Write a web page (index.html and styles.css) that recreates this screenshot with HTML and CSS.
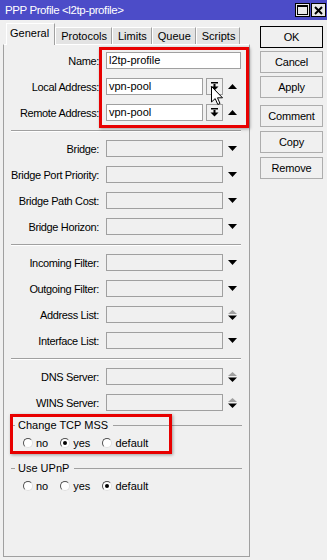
FILE: index.html
```html
<!DOCTYPE html>
<html lang="en">
<head>
    <meta charset="UTF-8">
    <title>PPP Profile</title>
    <link rel="stylesheet" href="styles.css">
</head>
<body>

<div class="window">
    <!-- title bar -->
    <div class="titlebar">
        <span class="title">PPP Profile &lt;l2tp-profile&gt;</span>
        <div class="tb-buttons">
            <span class="tb-btn"><svg width="11" height="10" viewBox="0 0 11 10"><rect x="0.5" y="0.5" width="10" height="9" fill="none" stroke="#000"/><rect x="0" y="0" width="11" height="2" fill="#000"/></svg></span>
            <span class="tb-btn"><svg width="9" height="9" viewBox="0 0 9 9"><path d="M1 1 L8 8 M8 1 L1 8" stroke="#000" stroke-width="2"/></svg></span>
        </div>
    </div>

    <div class="main">
        <div class="left">
            <div class="tabs">
                <div class="tab active">General</div>
                <div class="tab">Protocols</div>
                <div class="tab">Limits</div>
                <div class="tab">Queue</div>
                <div class="tab">Scripts</div>
            </div>

            <div class="panel">
                <div class="row">
                    <span class="label">Name:</span>
                    <span class="field filled wide">l2tp-profile</span>
                </div>
                <div class="row">
                    <span class="label">Local Address:</span>
                    <span class="field filled short">vpn-pool</span>
                    <span class="spin"><svg width="9" height="9" viewBox="0 0 9 9"><rect x="1" y="0" width="7" height="1.5" fill="#000"/><rect x="3.5" y="2" width="2" height="3" fill="#000"/><polygon points="0.5,4.5 8.5,4.5 4.5,8.5" fill="#000"/></svg></span>
                    <svg class="arrow up" width="9" height="5" viewBox="0 0 9 5"><polygon points="4.5,0 9,5 0,5" fill="#000"/></svg>
                </div>
                <div class="row">
                    <span class="label">Remote Address:</span>
                    <span class="field filled short">vpn-pool</span>
                    <span class="spin"><svg width="9" height="9" viewBox="0 0 9 9"><rect x="1" y="0" width="7" height="1.5" fill="#000"/><rect x="3.5" y="2" width="2" height="3" fill="#000"/><polygon points="0.5,4.5 8.5,4.5 4.5,8.5" fill="#000"/></svg></span>
                    <svg class="arrow up" width="9" height="5" viewBox="0 0 9 5"><polygon points="4.5,0 9,5 0,5" fill="#000"/></svg>
                </div>

                <div class="sep"></div>

                <div class="row">
                    <span class="label">Bridge:</span>
                    <span class="field"></span>
                    <svg class="arrow" width="9" height="5" viewBox="0 0 9 5"><polygon points="0,0 9,0 4.5,5" fill="#000"/></svg>
                </div>
                <div class="row">
                    <span class="label">Bridge Port Priority:</span>
                    <span class="field"></span>
                    <svg class="arrow" width="9" height="5" viewBox="0 0 9 5"><polygon points="0,0 9,0 4.5,5" fill="#000"/></svg>
                </div>
                <div class="row">
                    <span class="label">Bridge Path Cost:</span>
                    <span class="field"></span>
                    <svg class="arrow" width="9" height="5" viewBox="0 0 9 5"><polygon points="0,0 9,0 4.5,5" fill="#000"/></svg>
                </div>
                <div class="row">
                    <span class="label">Bridge Horizon:</span>
                    <span class="field"></span>
                    <svg class="arrow" width="9" height="5" viewBox="0 0 9 5"><polygon points="0,0 9,0 4.5,5" fill="#000"/></svg>
                </div>

                <div class="sep"></div>

                <div class="row">
                    <span class="label">Incoming Filter:</span>
                    <span class="field"></span>
                    <svg class="arrow" width="9" height="5" viewBox="0 0 9 5"><polygon points="0,0 9,0 4.5,5" fill="#000"/></svg>
                </div>
                <div class="row">
                    <span class="label">Outgoing Filter:</span>
                    <span class="field"></span>
                    <svg class="arrow" width="9" height="5" viewBox="0 0 9 5"><polygon points="0,0 9,0 4.5,5" fill="#000"/></svg>
                </div>
                <div class="row">
                    <span class="label">Address List:</span>
                    <span class="field"></span>
                    <svg class="arrow" width="9" height="10" viewBox="0 0 9 10"><polygon points="4.5,0 9,4 0,4" fill="#a0a0a0"/><polygon points="0,5.5 9,5.5 4.5,10" fill="#000"/></svg>
                </div>
                <div class="row">
                    <span class="label">Interface List:</span>
                    <span class="field"></span>
                    <svg class="arrow" width="9" height="5" viewBox="0 0 9 5"><polygon points="0,0 9,0 4.5,5" fill="#000"/></svg>
                </div>

                <div class="sep"></div>

                <div class="row">
                    <span class="label">DNS Server:</span>
                    <span class="field"></span>
                    <svg class="arrow" width="9" height="10" viewBox="0 0 9 10"><polygon points="4.5,0 9,4 0,4" fill="#a0a0a0"/><polygon points="0,5.5 9,5.5 4.5,10" fill="#000"/></svg>
                </div>
                <div class="row">
                    <span class="label">WINS Server:</span>
                    <span class="field"></span>
                    <svg class="arrow" width="9" height="10" viewBox="0 0 9 10"><polygon points="4.5,0 9,4 0,4" fill="#a0a0a0"/><polygon points="0,5.5 9,5.5 4.5,10" fill="#000"/></svg>
                </div>

                <!-- radio groups -->
                <div class="group">
                    <div class="group-title"><span>Change TCP MSS</span></div>
                    <div class="radios">
                        <span class="option"><span class="radio"></span>no</span>
                        <span class="option"><span class="radio checked"></span>yes</span>
                        <span class="option"><span class="radio"></span>default</span>
                    </div>
                </div>
                <div class="group second">
                    <div class="group-title"><span>Use UPnP</span></div>
                    <div class="radios">
                        <span class="option"><span class="radio"></span>no</span>
                        <span class="option"><span class="radio"></span>yes</span>
                        <span class="option"><span class="radio checked"></span>default</span>
                    </div>
                </div>
            </div>
        </div>

        <div class="buttons">
            <div class="btn default">OK</div>
            <div class="btn">Cancel</div>
            <div class="btn">Apply</div>
            <div class="btn gap">Comment</div>
            <div class="btn">Copy</div>
            <div class="btn">Remove</div>
        </div>
    </div>

    <!-- red highlight marks and the mouse pointer -->
    <div class="mark mark-addr"></div>
    <div class="mark mark-mss"></div>
    <svg class="cursor" width="13" height="20" viewBox="0 0 13 20"><path d="M0.5 0.5 L0.5 16 L4.2 12.6 L6.8 18.5 L9 17.5 L6.5 11.8 L11.5 11.8 Z" fill="#fff" stroke="#000" stroke-width="1"/></svg>
</div>

</body>
</html>
```

FILE: styles.css
```css
body {
    margin: 0;
    background-color: #f0f0f0;
    font-family: "Liberation Sans", Arial, sans-serif;
    font-size: 11px;
    color: #000;
}

.window {
    position: relative;
    width: 327px;
    height: 560px;
    overflow: hidden;
}

.titlebar {
    height: 20px;
    background-color: #4c4cc8;
    color: #fff;
    display: flex;
    align-items: center;
    padding-left: 5px;
}

.title {
    font-size: 11.5px;
    letter-spacing: -0.4px;
}

.tb-buttons {
    margin-left: auto;
    display: flex;
    gap: 1px;
    margin-right: 1px;
}

.tb-btn {
    width: 15px;
    height: 14px;
    box-sizing: border-box;
    border: 1px solid #000;
    background-color: #e8e8e8;
    display: flex;
    align-items: center;
    justify-content: center;
}

.main {
    display: flex;
    padding-left: 3px;
    gap: 10px;
}

.left {
    width: 247px;
}

.tabs {
    height: 24px;
    display: flex;
    align-items: flex-end;
    padding-left: 3px;
}

.tab {
    height: 17px;
    box-sizing: border-box;
    padding: 0 4px 0 5px;
    line-height: 16px;
    background-color: #e3e3e3;
    border-top: 1px solid #fff;
    border-left: 1px solid #fff;
    border-right: 1px solid #a0a0a0;
}

.tab.active {
    height: 22px;
    margin-bottom: -1px;
    line-height: 19px;
    padding: 0 5px 0 3px;
    background-color: #f0f0f0;
    position: relative;
    z-index: 1;
}

.panel {
    height: 513px;
    box-sizing: border-box;
    border: 1px solid #a0a0a0;
    border-top-color: #fff;
    padding-top: 7px;
}

.row {
    display: flex;
    align-items: center;
    height: 17px;
    margin-bottom: 9px;
}

.label {
    width: 95px;
    margin-right: 7px;
    text-align: right;
    white-space: nowrap;
    letter-spacing: -0.35px;
}

.field {
    width: 117px;
    height: 17px;
    box-sizing: border-box;
    border: 1px solid #a0a0a0;
    background-color: #f0f0f0;
    padding-left: 2px;
    line-height: 15px;
}

.field.filled {
    background-color: #fff;
}

.field.wide {
    width: 135px;
}

.field.short {
    width: 97px;
}

.spin {
    width: 17px;
    height: 17px;
    box-sizing: border-box;
    margin-left: 3px;
    border: 1px solid #a0a0a0;
    display: flex;
    align-items: center;
    justify-content: center;
}

.arrow {
    margin-left: 5px;
    display: block;
}

.sep {
    margin: 0 8px 9px 7px;
    border-top: 1px solid #a0a0a0;
    box-shadow: 0 1px 0 #fff;
}

.group.second {
    margin-top: 15px;
}

.group-title {
    display: flex;
    align-items: center;
    height: 11px;
    line-height: 11px;
    margin: 0 7px;
}

.group-title::before {
    content: "";
    width: 4px;
    border-top: 1px solid #a0a0a0;
    margin-right: 3px;
}

.group-title::after {
    content: "";
    flex: 1;
    border-top: 1px solid #a0a0a0;
    margin-left: 5px;
}

.radios {
    display: flex;
    align-items: center;
    height: 11px;
    margin-top: 6px;
    padding-left: 19px;
}

.option {
    display: flex;
    align-items: center;
    margin-right: 12px;
}

.radio {
    width: 10px;
    height: 10px;
    box-sizing: border-box;
    border-radius: 50%;
    border: 1px solid;
    border-color: #505050 #e0e0e0 #e0e0e0 #505050;
    background-color: #fff;
    margin-right: 3px;
    position: relative;
}

.radio.checked::after {
    content: "";
    position: absolute;
    left: 2px;
    top: 2px;
    width: 4px;
    height: 4px;
    border-radius: 50%;
    background-color: #000;
}

.buttons {
    padding-top: 6px;
    width: 63px;
}

.btn {
    height: 22px;
    box-sizing: border-box;
    border: 1px solid #adadad;
    background-color: #f0f0f0;
    text-align: center;
    line-height: 20px;
    margin-bottom: 3px;
    letter-spacing: -0.2px;
}

.btn.default {
    border-color: #000;
}

.btn.gap {
    margin-top: 7px;
}

.btn.gap, .btn.gap ~ .btn {
    margin-bottom: 4px;
}

.mark {
    position: absolute;
    box-sizing: border-box;
    border: 3px solid #e80000;
    box-shadow: 1px 1px 3px rgba(0, 0, 0, 0.35);
}

.mark-addr {
    left: 99px;
    top: 47px;
    width: 150px;
    height: 81px;
}

.mark-mss {
    left: 10px;
    top: 414px;
    width: 162px;
    height: 40px;
}

.cursor {
    position: absolute;
    left: 211px;
    top: 86px;
}
```
